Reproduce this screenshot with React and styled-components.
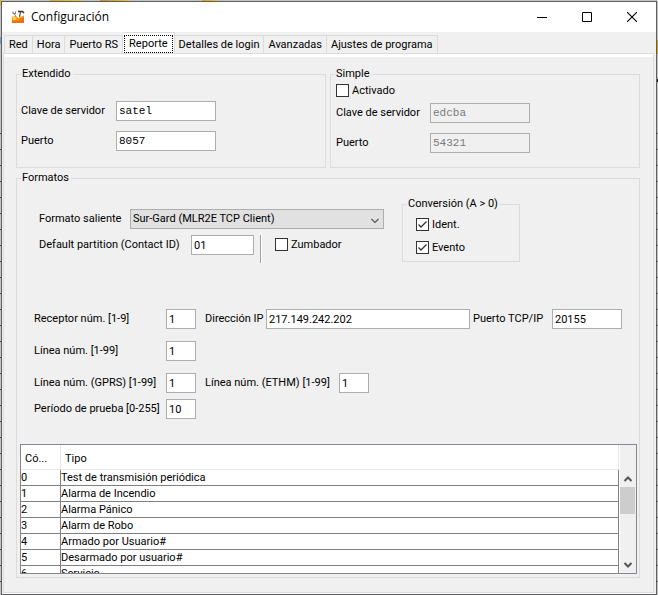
import React, { useState } from "react";
import styled, { createGlobalStyle, css } from "styled-components";

const GlobalStyle = createGlobalStyle`
  * { box-sizing: border-box; }
  body {
    margin: 0;
    background: #c4c4c4;
  }
  button, input, select, table { font: inherit; color: inherit; }
`;

/* Spreadsheet-like desktop that shows around the edges of the dialog. */
const Desktop = styled.div`
  min-height: 100vh;
  padding: 1px;
  color: #000;
  font: 11px/14px Roboto, Tahoma, sans-serif;
  background:
    linear-gradient(#c99a14, #c99a14) 100% 40px / 2px 14px no-repeat,
    linear-gradient(#111, #111) 100% 79px / 2px 3px no-repeat,
    linear-gradient(90deg, #d9a520, #e8c440) 50px 0 / 32px 1px no-repeat,
    linear-gradient(90deg, #c98a20, #e8c440) 100px 0 / 30px 1px no-repeat,
    linear-gradient(90deg, #d9a520, #e8c440) 202px 0 / 16px 1px no-repeat,
    linear-gradient(#e3b53a, #e3b53a) 0 0 / 2px 6px no-repeat,
    linear-gradient(#6aa2c8, #6aa2c8) 0 37px / 2px 7px no-repeat,
    linear-gradient(#c4c4c4, #c4c4c4) 0 0 / 100% 120px no-repeat,
    repeating-linear-gradient(#444 0 1px, #c4c4c4 1px 16px) 0 5px / 100% 100%,
    #c4c4c4;
`;

const Dialog = styled.main`
  min-height: calc(100vh - 2px);
  display: flex;
  flex-direction: column;
  background: #f0f0f0;
  border: 1px solid #5e5e60;
`;

const TitleBar = styled.header`
  display: flex;
  align-items: center;
  height: 30px;
  padding: 0 2px 0 9px;
  background: #fff;
`;

const Title = styled.h1`
  flex: 1;
  margin: 0 0 0 6px;
  font: 400 12px/16px "Open Sans", "Segoe UI", sans-serif;
`;

const CaptionButton = styled.button`
  display: grid;
  place-items: center;
  width: 45px;
  height: 30px;
  padding: 0;
  border: 0;
  background: none;
`;

const Tabs = styled.div`
  display: flex;
  align-items: flex-end;
  height: 21px;
  padding-left: 2px;
`;

const Tab = styled.button`
  height: 18px;
  padding: 0 4px;
  border: 1px solid #dcdcdc;
  border-left-width: ${(p) => (p.$first ? "1px" : "0")};
  border-bottom: 0;
  background: #f0f0f0;
  line-height: 17px;
  white-space: nowrap;
  ${(p) =>
    p.$selected &&
    css`
      height: 21px;
      padding: 1px 1px 0;
      background: #fff;
    `}
`;

const TabFocus = styled.span`
  display: block;
  padding: 0 4px;
  line-height: 16px;
  border: 1px dotted #000;
`;

const Page = styled.section`
  flex: 1;
  margin: 0 2px 1px 1px;
  padding: 13px 13px 14px 12px;
  border: 1px solid #dcdcdc;
  box-shadow: inset 0 3px #fff, 0 1px #fff;
`;

const Group = styled.fieldset`
  min-width: 0;
  margin: 0;
  padding: 0 0 0 4px;
  border: 1px solid #dcdcdc;
`;

const FormatsGroup = styled(Group)`
  margin-top: 3px;
`;

const Legend = styled.legend`
  padding: 0 2px 0 1px;
  line-height: 14px;
`;

const Servers = styled.div`
  display: grid;
  grid-template-columns: 1fr 1fr;
  gap: 4px;
`;

const ServerForm = styled.div`
  display: grid;
  gap: 10px;
  padding: 20px 0 16px;
`;

const SimpleForm = styled.div`
  display: grid;
  gap: 6px;
  padding: 3px 0 0 1px;
`;

const SimpleFields = styled.div`
  display: grid;
  gap: 10px;
`;

const ServerRow = styled.div`
  display: grid;
  grid-template-columns: ${(p) => (p.$narrow ? "94px" : "95px")} 100px;
  align-items: center;
`;

const Label = styled.label`
  white-space: nowrap;
`;

const Input = styled.input`
  width: ${(p) => p.$width || "100%"};
  min-width: 0;
  height: 20px;
  padding: 0 2px;
  border: 1px solid #abadb3;
  border-radius: 0;
  outline: 0;
  background: #fff;
  ${(p) =>
    p.$mono &&
    css`
      font: 11px "Courier New", "Liberation Mono", monospace;
    `}
  &:disabled {
    color: #7a7a7a;
    background: #f0f0f0;
  }
`;

const PortInput = styled(Input)`
  flex: none;
  width: 70px;
`;

const CheckLabel = styled.label`
  display: flex;
  align-items: center;
  gap: 3px;
  height: 13px;
`;

const CheckBox = styled.input`
  appearance: none;
  width: 13px;
  height: 13px;
  margin: 0;
  border: 1px solid #333;
  background: #fff;
  &:checked {
    background: #fff
      url("data:image/svg+xml,%3Csvg xmlns='http://www.w3.org/2000/svg' viewBox='0 0 11 11'%3E%3Cpath d='M1.5 5.5 4 8 9.5 2.5' fill='none' stroke='%23333' stroke-width='1.3'/%3E%3C/svg%3E");
  }
`;

const Formats = styled.div`
  display: flex;
  align-items: flex-start;
  gap: 18px;
  padding: 12px 119px 0 18px;
`;

const Outgoing = styled.div`
  flex: 1;
  display: grid;
  gap: 6px;
  padding-top: 12px;
`;

const SelectRow = styled.div`
  display: grid;
  grid-template-columns: 91px 1fr;
  align-items: center;
`;

const SelectWrap = styled.div`
  display: grid;
  align-items: center;
  svg, select { grid-area: 1 / 1; }
  svg { justify-self: end; margin: 3px 4px 0 0; pointer-events: none; }
`;

const Select = styled.select`
  appearance: none;
  width: 100%;
  height: 20px;
  padding: 0 20px 0 2px;
  border: 1px solid #adadad;
  border-radius: 0;
  background: #e1e1e1;
`;

const PartitionRow = styled.div`
  display: flex;
  align-items: flex-start;
  height: 28px;
`;

const PartitionField = styled.div`
  display: grid;
  grid-template-columns: 152px 63px;
  align-items: center;
`;

const Divider = styled.span`
  width: 2px;
  height: 28px;
  margin: 0 13px 0 6px;
  background: #fff;
  border-left: 1px solid #a0a0a0;
`;

const BuzzerSlot = styled.div`
  padding-top: 3px;
`;

const Conversion = styled.div`
  width: 118px;
`;

const ConversionChecks = styled.div`
  display: grid;
  gap: 10px;
  padding: 7px 0 7px 9px;
`;

const Receiver = styled.div`
  display: grid;
  gap: 12px;
  padding: 46px 17px 25px 13px;
`;

const ReceiverRow = styled.div`
  display: grid;
  grid-template-columns: 132px 30px 1fr;
  align-items: center;
`;

const RowExtra = styled.div`
  display: flex;
  align-items: center;
  padding-left: 9px;
`;

const FieldText = styled(Label)`
  flex: none;
  width: ${(p) => p.$width};
`;

const PortText = styled(Label)`
  flex: none;
  width: 82px;
  padding-left: 3px;
`;

const TightRows = styled.div`
  display: grid;
  gap: 6px;
`;

const TableFrame = styled.div`
  display: grid;
  grid-template-columns: 1fr 17px;
  height: 130px;
  margin: 0 2px 3px -1px;
  overflow: hidden;
  border: 1px solid #828790;
`;

const TableView = styled.div`
  overflow: hidden;
  background: #fff;
`;

const Table = styled.table`
  width: 100%;
  table-layout: fixed;
  border-collapse: separate;
  border-spacing: 0;
`;

const HeadCell = styled.th`
  width: ${(p) => p.$width || "auto"};
  height: 25px;
  padding: 3px 4px 0;
  font-weight: 400;
  text-align: left;
  border-right: 1px solid #e5e5e5;
  border-bottom: 1px solid #e5e5e5;
`;

const Cell = styled.td`
  height: 16px;
  padding: 0;
  line-height: 15px;
  border-right: 1px solid #808080;
  border-bottom: 1px solid #808080;
`;

const ScrollBar = styled.div`
  display: grid;
  grid-template-rows: 25px 17px 27px 1fr 17px;
  padding-right: 1px;
  background: #f0f0f0;
  border-left: 1px solid #fff;
`;

const ScrollButton = styled.button`
  display: grid;
  place-items: center;
  padding: 0;
  border: 0;
  background: none;
`;

const Thumb = styled.div`
  background: #cdcdcd;
`;

const EVENTS = [
  "Test de transmisión periódica",
  "Alarma de Incendio",
  "Alarma Pánico",
  "Alarm de Robo",
  "Armado por Usuario#",
  "Desarmado por usuario#",
  "Servicio",
];

const TABS = ["Red", "Hora", "Puerto RS", "Reporte", "Detalles de login", "Avanzadas", "Ajustes de programa"];

function AppIcon() {
  return (
    <svg width="14" height="14" viewBox="0 0 14 14" aria-hidden="true">
      <path d="M1 6.5h5l1 1.5 6-2.5V13H1z" fill="#f39a12" />
      <path d="M1 10l6 .5 6-3.5v6H1z" fill="#e9730c" />
      <path d="M1.500 7h4l-.5 3-3 .5z" fill="#ffd04a" />
      <path d="M2 1.500v2h2.500v-2M3.300 3.500 5 7" fill="none" stroke="#777" />
      <path d="M9.500 2 8.500 7" fill="none" stroke="#8a5a2a" strokeWidth="1.300" />
      <path d="M7 1.500h4.500L13 3" fill="none" stroke="#333" strokeWidth="1.500" />
    </svg>
  );
}

function Chevron({ up, bold }) {
  return (
    <svg width="10" height="8" viewBox="0 0 10 8" aria-hidden="true">
      <path
        d={up ? "M1.5 6 5 2.5 8.5 6" : "M1.5 2 5 5.5 8.5 2"}
        fill="none"
        stroke="#555"
        strokeWidth={bold ? 2 : 1.2}
      />
    </svg>
  );
}

function Check({ id, children, defaultChecked }) {
  return (
    <CheckLabel htmlFor={id}>
      <CheckBox id={id} type="checkbox" defaultChecked={defaultChecked} />
      {children}
    </CheckLabel>
  );
}

function ServerField({ id, label, value, disabled }) {
  return (
    <ServerRow $narrow={disabled}>
      <Label htmlFor={id}>{label}</Label>
      <Input id={id} $mono defaultValue={value} disabled={disabled} />
    </ServerRow>
  );
}

function NumberRow({ id, label, value, children }) {
  return (
    <ReceiverRow>
      <Label htmlFor={id}>{label}</Label>
      <Input id={id} defaultValue={value} />
      {children}
    </ReceiverRow>
  );
}

export default function App() {
  const [tab, setTab] = useState("Reporte");
  return (
    <Desktop>
      <GlobalStyle />
      <Dialog>
        <TitleBar>
          <AppIcon />
          <Title>Configuración</Title>
          <CaptionButton aria-label="Minimizar">
            <svg width="10" height="10"><path d="M0 5.5h10" stroke="#000" /></svg>
          </CaptionButton>
          <CaptionButton aria-label="Maximizar">
            <svg width="10" height="10"><path d="M.5.5h9v9h-9z" fill="none" stroke="#000" /></svg>
          </CaptionButton>
          <CaptionButton aria-label="Cerrar">
            <svg width="10" height="10"><path d="M0 0l10 10M10 0 0 10" stroke="#000" strokeWidth="1.1" /></svg>
          </CaptionButton>
        </TitleBar>

        <Tabs role="tablist">
          {TABS.map((name, i) => (
            <Tab
              key={name}
              role="tab"
              aria-selected={name === tab}
              $first={i === 0}
              $selected={name === tab}
              onClick={() => setTab(name)}
            >
              {name === tab ? <TabFocus>{name}</TabFocus> : name}
            </Tab>
          ))}
        </Tabs>

        <Page role="tabpanel">
          <Servers>
            <Group>
              <Legend>Extendido</Legend>
              <ServerForm>
                <ServerField id="ext-key" label="Clave de servidor" value="satel" />
                <ServerField id="ext-port" label="Puerto" value="8057" />
              </ServerForm>
            </Group>
            <Group>
              <Legend>Simple</Legend>
              <SimpleForm>
                <Check id="simple-on">Activado</Check>
                <SimpleFields>
                  <ServerField id="simple-key" label="Clave de servidor" value="edcba" disabled />
                  <ServerField id="simple-port" label="Puerto" value="54321" disabled />
                </SimpleFields>
              </SimpleForm>
            </Group>
          </Servers>

          <FormatsGroup>
            <Legend>Formatos</Legend>
            <Formats>
              <Outgoing>
                <SelectRow>
                  <Label htmlFor="format">Formato saliente</Label>
                  <SelectWrap>
                    <Select id="format" defaultValue="sg">
                      <option value="sg">Sur-Gard (MLR2E TCP Client)</option>
                    </Select>
                    <Chevron />
                  </SelectWrap>
                </SelectRow>
                <PartitionRow>
                  <PartitionField>
                    <Label htmlFor="partition">Default partition (Contact ID)</Label>
                    <Input id="partition" defaultValue="01" />
                  </PartitionField>
                  <Divider />
                  <BuzzerSlot>
                    <Check id="buzzer">Zumbador</Check>
                  </BuzzerSlot>
                </PartitionRow>
              </Outgoing>
              <Conversion>
                <Group>
                  <Legend>{"Conversión (A > 0)"}</Legend>
                  <ConversionChecks>
                    <Check id="ident" defaultChecked>Ident.</Check>
                    <Check id="event" defaultChecked>Evento</Check>
                  </ConversionChecks>
                </Group>
              </Conversion>
            </Formats>

            <Receiver>
              <NumberRow id="receiver" label="Receptor núm. [1-9]" value="1">
                <RowExtra>
                  <FieldText htmlFor="ip" $width="61px">Dirección IP</FieldText>
                  <Input id="ip" defaultValue="217.149.242.202" />
                  <PortText htmlFor="tcp">Puerto TCP/IP</PortText>
                  <PortInput id="tcp" defaultValue="20155" />
                </RowExtra>
              </NumberRow>
              <NumberRow id="line" label="Línea núm. [1-99]" value="1" />
              <TightRows>
                <NumberRow id="gprs" label="Línea núm. (GPRS) [1-99]" value="1">
                  <RowExtra>
                    <FieldText htmlFor="ethm" $width="134px">Línea núm. (ETHM) [1-99]</FieldText>
                    <Input id="ethm" $width="30px" defaultValue="1" />
                  </RowExtra>
                </NumberRow>
                <NumberRow id="test" label="Período de prueba [0-255]" value="10" />
              </TightRows>
            </Receiver>

            <TableFrame>
              <TableView>
                <Table>
                  <thead>
                    <tr>
                      <HeadCell $width="40px">Có...</HeadCell>
                      <HeadCell>Tipo</HeadCell>
                    </tr>
                  </thead>
                  <tbody>
                    {EVENTS.map((name, code) => (
                      <tr key={name}>
                        <Cell>{code}</Cell>
                        <Cell>{name}</Cell>
                      </tr>
                    ))}
                  </tbody>
                </Table>
              </TableView>
              <ScrollBar>
                <span />
                <ScrollButton aria-label="Subir"><Chevron up bold /></ScrollButton>
                <Thumb />
                <span />
                <ScrollButton aria-label="Bajar"><Chevron bold /></ScrollButton>
              </ScrollBar>
            </TableFrame>
          </FormatsGroup>
        </Page>
      </Dialog>
    </Desktop>
  );
}
